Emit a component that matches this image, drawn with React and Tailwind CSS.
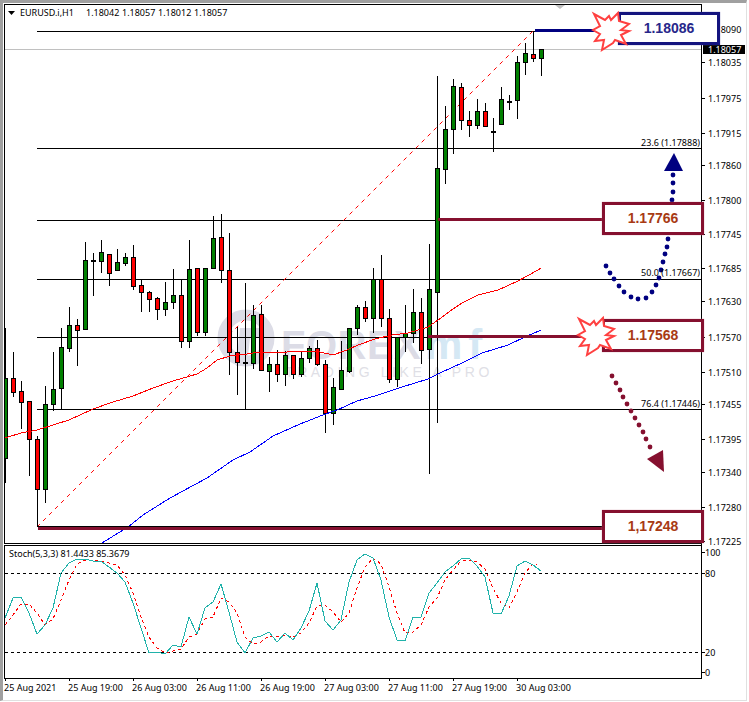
const candles = [
  [328, 483, 378, 458, "g"], [352, 397, 378, 392, "r"], [381, 429, 391, 402, "r"], [401, 476, 401, 439, "r"],
  [436, 490, 439, 489, "r"], [386, 503, 404, 489, "g"], [352, 411, 389, 404, "g"], [328, 409, 347, 388, "g"],
  [307, 352, 325, 348, "g"], [319, 366, 325, 330, "r"], [242, 329, 260, 329, "g"], [253, 296, 260, 260, "d"],
  [240, 273, 252, 261, "g"], [254, 286, 254, 273, "r"], [249, 271, 262, 270, "g"], [253, 266, 257, 263, "g"],
  [245, 290, 257, 286, "r"], [280, 312, 285, 292, "r"], [291, 312, 292, 299, "r"], [297, 320, 298, 309, "r"],
  [282, 316, 302, 309, "g"], [269, 309, 295, 302, "g"], [280, 348, 295, 341, "r"], [240, 348, 269, 341, "g"],
  [268, 336, 268, 332, "r"], [268, 336, 268, 332, "g"], [216, 268, 238, 268, "g"], [214, 283, 237, 270, "r"],
  [233, 375, 270, 352, "r"], [327, 395, 352, 362, "r"], [283, 409, 362, 362, "d"], [305, 369, 315, 363, "g"],
  [305, 370, 314, 370, "r"], [357, 392, 364, 371, "g"], [350, 382, 364, 374, "r"], [351, 386, 355, 374, "g"],
  [355, 379, 355, 374, "r"], [352, 377, 358, 374, "g"], [346, 363, 348, 358, "g"], [340, 366, 348, 364, "r"],
  [360, 433, 364, 413, "r"], [378, 425, 387, 413, "g"], [341, 390, 370, 389, "g"], [328, 373, 328, 371, "g"],
  [305, 335, 307, 328, "g"], [301, 322, 307, 318, "r"], [268, 333, 279, 318, "g"], [255, 327, 279, 318, "r"],
  [309, 383, 318, 379, "r"], [337, 387, 337, 379, "g"], [305, 352, 333, 337, "g"], [289, 343, 312, 333, "g"],
  [298, 364, 312, 350, "r"], [244, 474, 289, 349, "g"], [76, 423, 168, 292, "g"], [106, 184, 129, 169, "g"],
  [79, 154, 86, 129, "g"], [83, 130, 87, 120, "r"], [111, 137, 120, 125, "r"], [99, 129, 111, 125, "g"],
  [103, 127, 111, 126, "r"], [118, 152, 131, 131, "d"], [87, 124, 99, 124, "g"], [95, 110, 101, 101, "d"],
  [56, 119, 62, 100, "g"], [43, 75, 53, 62, "g"], [31, 62, 54, 58, "r"], [49, 76, 49, 58, "g"],
];

const priceTicks = [
  ["1.18090", 29], ["1.18035", 62], ["1.17975", 98], ["1.17915", 133], ["1.17860", 165], ["1.17800", 200],
  ["1.17745", 234], ["1.17685", 268], ["1.17630", 301], ["1.17570", 337], ["1.17510", 372], ["1.17455", 404],
  ["1.17395", 439], ["1.17340", 472], ["1.17280", 507], ["1.17225", 541],
];

const fibLines = [31, 148, 220, 279, 337, 409];

const fibLabels = [
  ["23.6 (1.17888)", 143],
  ["50.0 (1.17667)", 273],
  ["76.4 (1.17446)", 404],
];

const headerValues = ["1.18042", "1.18057", "1.18012", "1.18057"];

const redMa =
  "5,438 21,433 37,430 53,425 69,420 93,409 113,402 133,396 153,388 173,381 197,374 207,368 217,360 230,356 247,354 260,352 287,352 307,351 320,352 333,355 347,350 358,345 375,339 392,335 408,333 428,327 438,320 453,309 462,303 478,295 498,290 518,281 538,270 541,268";
const blueMa =
  "102,543 128,527 143,515 170,498 207,478 233,460 250,452 273,436 300,424 323,415 337,410 357,401 375,396 402,387 428,379 442,372 462,363 482,353 508,345 525,337 541,330";

const stochMain = [
  [5, 618], [13, 598], [21, 597], [29, 613], [37, 634], [45, 625], [53, 608], [61, 573], [69, 563], [77, 559], [85, 559],
  [93, 561], [101, 561], [109, 567], [117, 573], [125, 582], [133, 603], [141, 628], [149, 653], [157, 652], [165, 654],
  [173, 645], [181, 647], [189, 617], [197, 634], [205, 608], [213, 602], [221, 584], [229, 612], [237, 642], [245, 653],
  [253, 638], [261, 636], [269, 632], [277, 642], [285, 633], [293, 640], [301, 628], [309, 611], [317, 583], [325, 621],
  [333, 630], [341, 620], [349, 582], [357, 560], [365, 554], [373, 558], [381, 580], [389, 617], [397, 640], [405, 641],
  [413, 617], [421, 617], [429, 593], [437, 583], [445, 572], [453, 566], [461, 559], [469, 558], [477, 566], [485, 577],
  [493, 613], [501, 614], [509, 596], [517, 566], [525, 561], [533, 565], [541, 571],
].join(" ");

const stochSignal = [
  [5, 625], [13, 615], [21, 604], [29, 604], [37, 613], [45, 625], [53, 619], [61, 600], [69, 580], [77, 564], [85, 560],
  [93, 560], [101, 561], [109, 563], [117, 565], [125, 575], [133, 593], [141, 617], [149, 637], [157, 648], [165, 653],
  [173, 651], [181, 649], [189, 637], [197, 634], [205, 619], [213, 617], [221, 598], [229, 602], [237, 613], [245, 637],
  [253, 644], [261, 642], [269, 636], [277, 637], [285, 635], [293, 637], [301, 633], [309, 623], [317, 606], [325, 605],
  [333, 612], [341, 622], [349, 613], [357, 588], [365, 567], [373, 558], [381, 564], [389, 587], [397, 613], [405, 633],
  [413, 632], [421, 625], [429, 607], [437, 598], [445, 580], [453, 570], [461, 561], [469, 560], [477, 562], [485, 569],
  [493, 588], [501, 603], [509, 608], [517, 592], [525, 573], [533, 564], [537, 565],
].join(" ");

const navyDots = [
  [673, 175], [673, 183], [673, 192], [672, 200], [668, 239], [667, 247], [665, 254], [663, 262], [661, 270], [659, 278],
  [656, 285], [652, 292], [646, 298], [638, 299], [631, 297], [624, 292], [619, 286], [614, 279], [610, 273], [606, 266],
];
const maroonDots = [
  [612, 376], [616, 383], [620, 390], [623, 397], [627, 404], [631, 411], [635, 418], [639, 425], [643, 432], [646, 439], [650, 447],
];

const timeLabels = [
  "25 Aug 2021", "25 Aug 19:00", "26 Aug 03:00", "26 Aug 11:00", "26 Aug 19:00",
  "27 Aug 03:00", "27 Aug 11:00", "27 Aug 19:00", "30 Aug 03:00",
];

const starPoints =
  "-17,-17 -6,-11 -2,-15 0,-11 7,-18 8,-10 18,-7 10,-1 18,0 10,4 15,13 4,9 2,12 -9,19 -7,9 -16,10 -11,3 -18,-1 -11,-5";

function Candle({ data, index }) {
  const [wickTop, wickBottom, bodyTop, bodyBottom, kind] = data;
  const x = 5 + index * 8;
  return (
    <g shapeRendering="crispEdges">
      <line x1={x + 0.5} x2={x + 0.5} y1={wickTop} y2={wickBottom} stroke="#000" />
      {kind === "d" ? (
        <rect x={x - 2} y={bodyTop} width="5" height="2" fill="#000" />
      ) : (
        <rect
          x={x - 1.5}
          y={bodyTop + 0.5}
          width="4"
          height={Math.max(bodyBottom - bodyTop, 2)}
          fill={kind === "g" ? "#008000" : "#ff0000"}
          stroke="#000"
        />
      )}
    </g>
  );
}

function Watermark() {
  return (
    <g fontFamily="'Liberation Sans', sans-serif">
      <circle cx="246" cy="338" r="23" fill="none" stroke="#dcdce6" strokeWidth="11" />
      <path d="M236 366 L240 328 L262 328 L260 338 L250 338 L247 366 Z" fill="#dcdce6" />
      <text x="281" y="359" fontSize="40" fontWeight="700" fill="#dcdce6" letterSpacing="0.5">
        FOREX
      </text>
      <text x="425" y="359" fontSize="42" fontWeight="700" fill="#d5e8f4" letterSpacing="6">
        mf
      </text>
      <text x="285" y="377" fontSize="14" fill="#dfdfe6" letterSpacing="3.6">
        TRADING LIKE A PRO
      </text>
    </g>
  );
}

function MainChart() {
  return (
    <svg className="block shrink-0 overflow-visible" width="743" height="541" viewBox="4 4 743 541">
      <defs>
        <clipPath id="plot">
          <rect x="5" y="5" width="696" height="539" />
        </clipPath>
      </defs>
      <Watermark />
      <line x1="5" x2="701" y1="49.5" y2="49.5" stroke="#c0c0c0" shapeRendering="crispEdges" />
      {fibLines.map((y) => (
        <line key={y} x1="37" x2="701" y1={y + 0.5} y2={y + 0.5} stroke="#000" shapeRendering="crispEdges" />
      ))}
      <line x1="37.5" x2="37.5" y1="490" y2="527" stroke="#000" shapeRendering="crispEdges" />
      <line x1="37" x2="533" y1="527" y2="31" stroke="#ff0000" strokeDasharray="4 4.5" />
      <g clipPath="url(#plot)">
        {candles.map((c, i) => (
          <Candle key={i} data={c} index={i} />
        ))}
      </g>
      <polyline points={redMa} fill="none" stroke="#ff0000" shapeRendering="crispEdges" />
      <g clipPath="url(#plot)">
        <polyline points={blueMa} fill="none" stroke="#0000ff" shapeRendering="crispEdges" />
      </g>

      {/* level lines */}
      <line x1="37" x2="603" y1="526.5" y2="526.5" stroke="#000" shapeRendering="crispEdges" />
      <rect x="38" y="527" width="566" height="3" fill="#85102f" />
      <rect x="535" y="29" width="70" height="3" fill="#000080" />
      <rect x="438" y="218" width="166" height="3" fill="#85102f" />
      <rect x="428" y="335" width="164" height="3" fill="#85102f" />

      {/* arrows */}
      {navyDots.map(([x, y]) => (
        <circle key={`${x}-${y}`} cx={x} cy={y} r="2.4" fill="#000080" />
      ))}
      <polygon points="674,153 664,171 683,171" fill="#000080" />
      {maroonDots.map(([x, y]) => (
        <circle key={`${x}-${y}`} cx={x} cy={y} r="2.4" fill="#85102f" />
      ))}
      <polygon points="663,450 647,459 664,472" fill="#85102f" />

      {/* labels */}
      <polygon points="8,11 15,11 11.5,15" fill="#000" />
      <text x="20" y="15.5" fontSize="9" fill="#000">EURUSD.i,H1</text>
      {headerValues.map((v, i) => (
        <text key={i} x={86 + i * 36} y="15.5" fontSize="9" fill="#000">
          {v}
        </text>
      ))}
      <polygon points="555,5 565,5 560,9" fill="#c0c0c0" />
      {fibLabels.map(([label, y]) => (
        <text key={label} x="700" y={y + 3} fontSize="9" textAnchor="end" fill="#000">
          {label}
        </text>
      ))}

      {/* price axis */}
      <rect x="701" y="4" width="1" height="541" fill="#000" shapeRendering="crispEdges" />
      {priceTicks.map(([label, y]) => (
        <g key={label}>
          <rect x="702" y={y} width="3" height="1" fill="#000" shapeRendering="crispEdges" />
          <text x="708" y={y + 3.5} fontSize="9" fill="#000">
            {label}
          </text>
        </g>
      ))}
      <rect x="703" y="45" width="42" height="9" fill="#000" shapeRendering="crispEdges" />
      <text x="708" y="52.5" fontSize="9" fill="#fff">1.18057</text>

      <rect x="4.5" y="4.5" width="697" height="539" fill="none" stroke="#000" shapeRendering="crispEdges" />
    </svg>
  );
}

function StochPanel() {
  return (
    <svg className="block shrink-0" width="743" height="136" viewBox="4 545 743 136">
      <line x1="5" x2="701" y1="573.5" y2="573.5" stroke="#000" strokeDasharray="3 3" shapeRendering="crispEdges" />
      <line x1="5" x2="701" y1="652.5" y2="652.5" stroke="#000" strokeDasharray="3 3" shapeRendering="crispEdges" />
      <polyline points={stochSignal} fill="none" stroke="#ff0000" strokeDasharray="3 3" shapeRendering="crispEdges" />
      <polyline points={stochMain} fill="none" stroke="#20b2aa" shapeRendering="crispEdges" />
      <text x="9" y="557" fontSize="9" fill="#000">Stoch(5,3,3) 81.4433 85.3679</text>
      {[["100", 552], ["80", 573], ["20", 652], ["0", 672]].map(([label, y]) => (
        <g key={label}>
          <rect x="702" y={y} width="3" height="1" fill="#000" shapeRendering="crispEdges" />
          <text x="705" y={y + 3.5} fontSize="9" fill="#000">
            {label}
          </text>
        </g>
      ))}
      <rect x="4.5" y="545.5" width="697" height="133" fill="none" stroke="#000" shapeRendering="crispEdges" />
      {timeLabels.map((_, i) => (
        <rect key={i} x={5 + i * 64} y="679" width="1" height="2" fill="#000" shapeRendering="crispEdges" />
      ))}
    </svg>
  );
}

function LevelBox({ value, className }) {
  return (
    <div
      className={`absolute flex h-[33px] w-[102px] items-center justify-center border-[3px] bg-white font-['Liberation_Sans',Arial,sans-serif] text-[14px] font-bold ${className}`}
    >
      {value}
    </div>
  );
}

export default function App() {
  return (
    <div className="relative h-[702px] w-[749px] overflow-hidden bg-white font-['Noto_Sans',sans-serif]">
      <div className="h-[701px] w-[747px] border-t-[3px] border-r border-b border-l-[3px] border-t-[#a0a0a0] border-r-[#e0e0e0] border-b-[#e0e0e0] border-l-[#a0a0a0] pt-px pl-px">
        <MainChart />
        <StochPanel />
        <div className="flex text-[9px] leading-none text-black">
          {timeLabels.map((label) => (
            <span key={label} className="w-16 shrink-0 whitespace-nowrap pt-0.5">
              {label}
            </span>
          ))}
        </div>
      </div>

      <LevelBox value="1.18086" className="top-3 left-[618px] border-[#14147f] text-[#27278a] shadow-[0_0_1px_#6a6ab0]" />
      <LevelBox value="1.17766" className="top-[202px] left-[602px] border-[#85102f] text-[#a83a14] shadow-[0_0_1px_#c98a9c]" />
      <LevelBox value="1.17568" className="top-[319px] left-[602px] border-[#85102f] text-[#a83a14] shadow-[0_0_1px_#c98a9c]" />
      <LevelBox value="1,17248" className="top-[510px] left-[602px] border-[#85102f] text-[#a83a14] shadow-[0_0_1px_#c98a9c]" />

      {/* bursts sit on the level boxes */}
      <svg className="pointer-events-none absolute inset-0" width="749" height="702">
        <polygon points={starPoints} transform="translate(611 31)" fill="#fff" stroke="#ff4040" strokeWidth="2" />
        <polygon points={starPoints} transform="translate(596 336)" fill="#fff" stroke="#ff4040" strokeWidth="2" />
      </svg>
    </div>
  );
}
